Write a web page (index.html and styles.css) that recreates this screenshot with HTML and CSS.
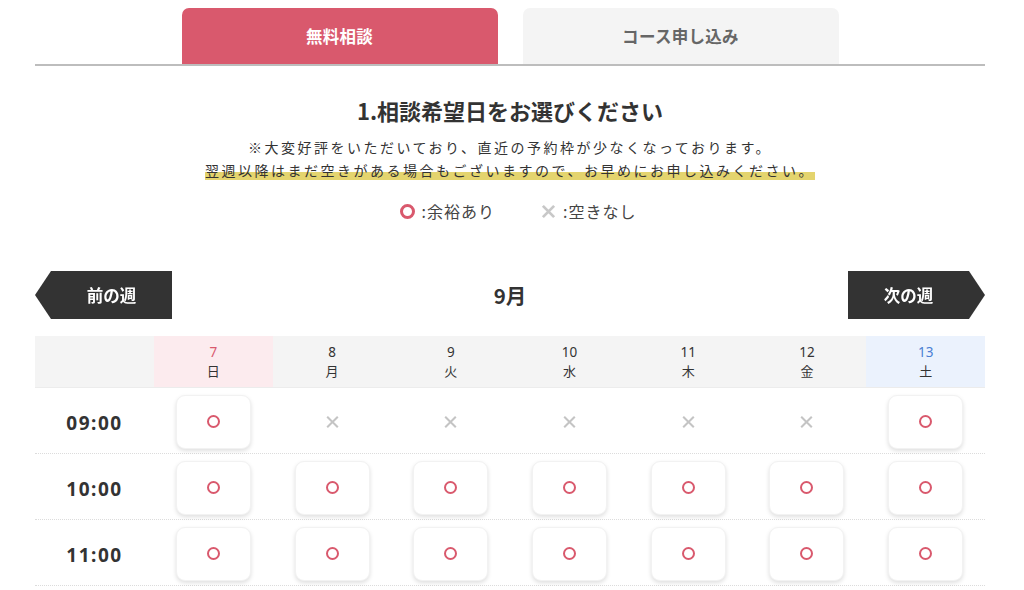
FILE: index.html
```html
<!DOCTYPE html>
<html lang="ja">
<head>
<meta charset="utf-8">
<title>予約</title>
<link rel="stylesheet" href="styles.css">
</head>
<body>
<div class="page">
  <div class="tabs">
    <div class="tab tab-active">無料相談</div>
    <div class="tab">コース申し込み</div>
  </div>

  <h1 class="title">1.相談希望日をお選びください</h1>
  <p class="note">※大変好評をいただいており、直近の予約枠が少なくなっております。<br><span class="mark">翌週以降はまだ空きがある場合もございますので、お早めにお申し込みください。</span></p>

  <div class="legend">
    <span class="legend-item"><span class="lg-circle"></span>:余裕あり</span>
    <span class="legend-item"><svg class="lg-cross" viewBox="0 0 16 16"><path d="M2 2L14 14M14 2L2 14"/></svg>:空きなし</span>
  </div>

  <div class="weeknav">
    <div class="navbtn prev">前の週</div>
    <div class="month">9月</div>
    <div class="navbtn next">次の週</div>
  </div>

  <div class="table">
    <div class="row head">
      <div class="cell"></div>
      <div class="cell day sun"><span class="num">7</span><span>日</span></div>
      <div class="cell day"><span class="num">8</span><span>月</span></div>
      <div class="cell day"><span class="num">9</span><span>火</span></div>
      <div class="cell day"><span class="num">10</span><span>水</span></div>
      <div class="cell day"><span class="num">11</span><span>木</span></div>
      <div class="cell day"><span class="num">12</span><span>金</span></div>
      <div class="cell day sat"><span class="num">13</span><span>土</span></div>
    </div>

    <div class="row">
      <div class="cell time">09:00</div>
      <div class="cell"><div class="slot"><span class="ok"></span></div></div>
      <div class="cell"><span class="ng"></span></div>
      <div class="cell"><span class="ng"></span></div>
      <div class="cell"><span class="ng"></span></div>
      <div class="cell"><span class="ng"></span></div>
      <div class="cell"><span class="ng"></span></div>
      <div class="cell"><div class="slot"><span class="ok"></span></div></div>
    </div>

    <div class="row">
      <div class="cell time">10:00</div>
      <div class="cell"><div class="slot"><span class="ok"></span></div></div>
      <div class="cell"><div class="slot"><span class="ok"></span></div></div>
      <div class="cell"><div class="slot"><span class="ok"></span></div></div>
      <div class="cell"><div class="slot"><span class="ok"></span></div></div>
      <div class="cell"><div class="slot"><span class="ok"></span></div></div>
      <div class="cell"><div class="slot"><span class="ok"></span></div></div>
      <div class="cell"><div class="slot"><span class="ok"></span></div></div>
    </div>

    <div class="row">
      <div class="cell time">11:00</div>
      <div class="cell"><div class="slot"><span class="ok"></span></div></div>
      <div class="cell"><div class="slot"><span class="ok"></span></div></div>
      <div class="cell"><div class="slot"><span class="ok"></span></div></div>
      <div class="cell"><div class="slot"><span class="ok"></span></div></div>
      <div class="cell"><div class="slot"><span class="ok"></span></div></div>
      <div class="cell"><div class="slot"><span class="ok"></span></div></div>
      <div class="cell"><div class="slot"><span class="ok"></span></div></div>
    </div>
  </div>
</div>
</body>
</html>
```

FILE: styles.css
```css
* { box-sizing: border-box; }
html, body { margin: 0; padding: 0; background: #fff; }
body {
  font-family: "Noto Sans", "Noto Sans CJK JP", sans-serif;
  color: #333;
}
.page {
  width: 950px;
  margin-left: 35px;
}
.tabs {
  display: flex;
  justify-content: center;
  gap: 25px;
  padding-top: 8px;
  border-bottom: 2px solid #bdbdbd;
}
.tab {
  width: 316px;
  height: 56px;
  border-radius: 7px 7px 0 0;
  background: #f4f4f4;
  color: #666;
  font-family: "Noto Sans CJK JP", sans-serif;
  font-weight: 700;
  font-size: 16.5px;
  letter-spacing: 0.3px;
  display: flex;
  align-items: center;
  justify-content: center;
}
.tab-active {
  background: #d9596d;
  color: #fff;
}
.title {
  margin: 28px 0 0;
  text-align: center;
  font-family: "Noto Sans CJK JP", sans-serif;
  font-size: 22px;
  line-height: 32px;
  font-weight: 700;
  color: #333;
}
.note {
  margin: 10px 0 0;
  text-align: center;
  font-family: "Noto Sans CJK JP", sans-serif;
  font-size: 14px;
  line-height: 23px;
  letter-spacing: 2.5px;
  color: #333;
}
.mark {
  background: linear-gradient(transparent 58%, #e4d46e 58%, #e4d46e 94%, transparent 94%);
  padding-bottom: 1px;
}
.legend {
  display: flex;
  justify-content: center;
  gap: 46px;
  margin-top: 18px;
  padding-left: 16px;
  font-family: "Noto Sans CJK JP", sans-serif;
  font-size: 16px;
  line-height: 22px;
  color: #444;
  letter-spacing: 1px;
}
.legend-item {
  display: flex;
  align-items: center;
  gap: 7px;
}
.lg-circle {
  width: 15px;
  height: 15px;
  border: 3px solid #d9596d;
  border-radius: 50%;
}
.lg-cross {
  width: 15px;
  height: 15px;
  stroke: #c8c8c8;
  stroke-width: 3;
  fill: none;
}
.weeknav {
  display: flex;
  align-items: center;
  justify-content: space-between;
  margin-top: 49px;
  height: 48px;
}
.navbtn {
  width: 137px;
  height: 48px;
  background: #333;
  color: #fff;
  font-family: "Noto Sans CJK JP", sans-serif;
  font-weight: 700;
  font-size: 16.5px;
  display: flex;
  align-items: center;
  justify-content: center;
  filter: drop-shadow(0 1px 1px rgba(0,0,0,0.25));
}
.prev {
  clip-path: polygon(16px 0, 100% 0, 100% 100%, 16px 100%, 0 50%);
  padding-left: 16px;
}
.next {
  clip-path: polygon(0 0, calc(100% - 16px) 0, 100% 50%, calc(100% - 16px) 100%, 0 100%);
  padding-right: 16px;
}
.month {
  font-family: "Noto Sans CJK JP", sans-serif;
  font-weight: 700;
  font-size: 20.5px;
  color: #333;
}
.table {
  margin-top: 17px;
}
.row {
  display: grid;
  grid-template-columns: 119px repeat(7, 1fr);
  height: 66px;
  padding-top: 2px;
  border-bottom: 1px dotted #dcdcdc;
}
.row.head {
  height: 52px;
  padding-top: 0;
  background: #f4f4f4;
  border-bottom: 1px solid #ececec;
}
.cell {
  display: flex;
  align-items: center;
  justify-content: center;
}
.day {
  flex-direction: column;
  font-size: 13px;
  line-height: 19px;
  color: #333;
  font-family: "Noto Sans", "Noto Sans CJK JP", sans-serif;
}
.day .num { font-size: 13.5px; }
.sun { background: #fcebee; }
.sun .num { color: #d9596d; }
.sat { background: #ebf2fd; }
.sat .num { color: #4a7fd4; }
.time {
  font-weight: 700;
  font-size: 19px;
  letter-spacing: 1.5px;
  color: #333;
  padding-top: 2px;
}
.slot {
  width: 75px;
  height: 54px;
  border-radius: 9px;
  background: #fff;
  border: 1px solid #f2f2f2;
  box-shadow: 0 2px 4px rgba(0,0,0,0.13);
  display: flex;
  align-items: center;
  justify-content: center;
}
.ok {
  width: 13px;
  height: 13px;
  border: 2px solid #d9596d;
  border-radius: 50%;
}
.ng {
  position: relative;
  width: 13px;
  height: 13px;
}
.ng::before, .ng::after {
  content: "";
  position: absolute;
  left: -1px;
  top: 5.5px;
  width: 15px;
  height: 2px;
  background: #c4c4c4;
  transform: rotate(45deg);
}
.ng::after { transform: rotate(-45deg); }
```
